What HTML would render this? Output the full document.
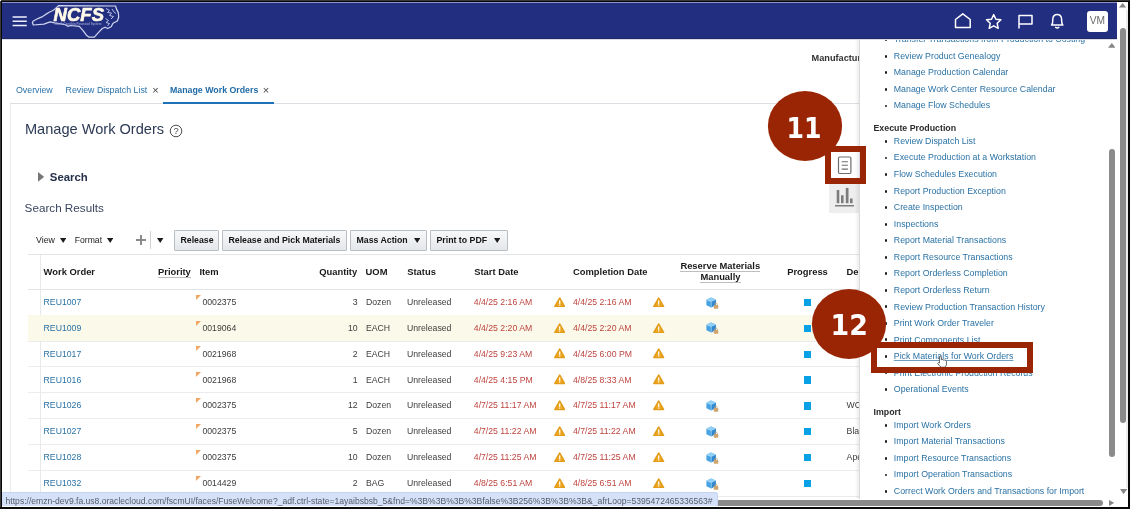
<!DOCTYPE html>
<html><head><meta charset="utf-8"><title>Manage Work Orders</title>
<style>
*{box-sizing:border-box;margin:0;padding:0}
html,body{width:1130px;height:509px;overflow:hidden;background:#fff}
body{will-change:transform}
body{position:relative;font-family:"Liberation Sans",sans-serif;font-size:9.5px;color:#333}
.a{position:absolute}
.t{position:absolute;white-space:nowrap;line-height:1}
#hdr{position:absolute;left:2px;top:2px;width:1115px;height:37px;background:#222e80;border-bottom:1px solid #21275f;box-shadow:0 1px 0 #d9daea}
.tab{font-size:8.8px;color:#2a72a8}
.hd{font-weight:bold;font-size:9.4px;color:#1a1a1a}
.cell{font-size:8.7px;color:#3c3c3c}
.red{color:#bd433e}
.wo{color:#2a72a5}
.btn{position:absolute;top:230px;height:21px;border:1px solid #b9bec4;background:linear-gradient(#f7f8f9,#e4e7ea);font-weight:bold;font-size:8.75px;color:#141414;line-height:19px;text-align:left;padding-left:5.5px;white-space:nowrap;border-radius:1px}
.li{position:absolute;left:893.8px;font-size:8.8px;color:#2a72a5;white-space:nowrap;line-height:1}
.bu{position:absolute;left:884.5px;width:2.9px;height:2.9px;border-radius:50%;background:#1c1c1c}
.sec{position:absolute;left:873.5px;font-size:8.8px;font-weight:bold;color:#2b2b2b;white-space:nowrap;line-height:1}
.tri{position:absolute;width:0;height:0;border-left:3.5px solid transparent;border-right:3.5px solid transparent;border-top:5px solid #222}
</style></head><body>
<div class="t tab" style="left:16px;top:86px;">Overview</div>
<div class="t tab" style="left:65.6px;top:86px;">Review Dispatch List</div>
<div class="t " style="left:152.2px;top:85.2px;color:#444;font-size:11px;">×</div>
<div class="t tab" style="left:170px;top:86px;font-weight:bold;color:#1f6aa5;">Manage Work Orders</div>
<div class="t " style="left:262.8px;top:85.2px;color:#444;font-size:11px;">×</div>
<div class="a" style="left:10px;top:103.4px;width:850px;height:1px;background:#dcdfe3"></div>
<div class="a" style="left:162.5px;top:101.6px;width:111px;height:2.2px;background:#1f72b8"></div>
<div class="a" style="left:10px;top:104px;width:1px;height:400px;background:#e9ebee"></div>
<div class="t " style="left:811.5px;top:54.3px;font-weight:bold;color:#333;font-size:9.2px;">Manufactur</div>
<div class="t " style="left:24.9px;top:122.1px;color:#2c3a55;font-size:14.6px;">Manage Work Orders</div>
<svg class="a" style="left:169.2px;top:124px" width="14" height="14" viewBox="0 0 14 14"><circle cx="7" cy="7" r="5.8" fill="none" stroke="#4e4e4e" stroke-width="1"/><text x="7" y="10.3" text-anchor="middle" font-family="Liberation Sans, sans-serif" font-size="9.4" fill="#4e4e4e">?</text></svg>
<svg class="a" style="left:38.2px;top:172.1px" width="6.2" height="9.8" viewBox="0 0 6.2 9.8"><polygon points="0,0 6.2,4.9 0,9.8" fill="#777"/></svg>
<div class="t " style="left:49.8px;top:172.2px;font-weight:bold;color:#25304a;font-size:11.4px;">Search</div>
<div class="t " style="left:24.6px;top:202.2px;color:#3a4660;font-size:11.7px;">Search Results</div>
<div class="t " style="left:36px;top:235.6px;color:#222;font-size:8.8px;">View</div>
<svg class="a" style="left:59.8px;top:238.2px" width="6.4" height="5" viewBox="0 0 6.4 5"><polygon points="0,0 6.4,0 3.2,5" fill="#1c1c1c"/></svg>
<div class="t " style="left:74.8px;top:235.6px;color:#222;font-size:8.6px;">Format</div>
<svg class="a" style="left:106.8px;top:238.2px" width="6.4" height="5" viewBox="0 0 6.4 5"><polygon points="0,0 6.4,0 3.2,5" fill="#1c1c1c"/></svg>
<div class="a" style="left:136px;top:238.7px;width:9.8px;height:2.7px;background:#8a8a8a"></div>
<div class="a" style="left:139.6px;top:235.1px;width:2.7px;height:9.8px;background:#8a8a8a"></div>
<div class="a" style="left:150.4px;top:231px;width:1px;height:18px;background:#d0d3d6"></div>
<svg class="a" style="left:157.2px;top:238.2px" width="6.4" height="5" viewBox="0 0 6.4 5"><polygon points="0,0 6.4,0 3.2,5" fill="#1c1c1c"/></svg>
<div class="btn" style="left:174px;width:45.4px">Release</div>
<div class="btn" style="left:222px;width:125px">Release and Pick Materials</div>
<div class="btn" style="left:350px;width:77.4px">Mass Action</div>
<svg class="a" style="left:413.6px;top:238.2px" width="6.4" height="5" viewBox="0 0 6.4 5"><polygon points="0,0 6.4,0 3.2,5" fill="#1c1c1c"/></svg>
<div class="btn" style="left:430px;width:77.6px">Print to PDF</div>
<svg class="a" style="left:493.8px;top:238.2px" width="6.4" height="5" viewBox="0 0 6.4 5"><polygon points="0,0 6.4,0 3.2,5" fill="#1c1c1c"/></svg>
<div class="a" style="left:28px;top:254.2px;width:832px;height:1px;background:#e2e4e6"></div>
<div class="a" style="left:28px;top:288.5px;width:832px;height:1px;background:#e2e4e6"></div>
<div class="a" style="left:40px;top:255px;width:1px;height:250px;background:#e8e9eb"></div>
<div class="t hd" style="left:43.6px;top:266.8px;">Work Order</div>
<div class="t hd" style="left:158px;top:266.8px;border-bottom:1px solid #bdbdbd;padding-bottom:1px;">Priority</div>
<div class="t hd" style="left:199.4px;top:266.8px;">Item</div>
<div class="t hd" style="left:319.2px;top:266.8px;">Quantity</div>
<div class="t hd" style="left:365.6px;top:266.8px;">UOM</div>
<div class="t hd" style="left:407.2px;top:266.8px;">Status</div>
<div class="t hd" style="left:474.2px;top:266.8px;">Start Date</div>
<div class="t hd" style="left:573px;top:266.8px;">Completion Date</div>
<div class="t hd" style="left:680.4px;top:261.2px;border-bottom:1px solid #bdbdbd;">Reserve Materials</div>
<div class="t hd" style="left:700.4px;top:271.8px;border-bottom:1px solid #bdbdbd;padding-bottom:1.2px;">Manually</div>
<div class="t hd" style="left:787.2px;top:266.8px;">Progress</div>
<div class="t hd" style="left:846.6px;top:266.8px;">De</div>
<div class="a" style="left:28px;top:314.65px;width:832px;height:1px;background:#ececee"></div>
<div class="t cell wo" style="left:43.6px;top:298.00px;">REU1007</div>
<div class="a" style="left:195.8px;top:294.70px;width:0;height:0;border-top:5.4px solid #f3a562;border-right:5.8px solid transparent"></div>
<div class="t cell" style="left:202.4px;top:298.00px;">0002375</div>
<div class="t cell" style="left:300px;width:57.6px;text-align:right;top:298.00px">3</div>
<div class="t cell" style="left:366px;top:298.00px;">Dozen</div>
<div class="t cell" style="left:407px;top:298.00px;">Unreleased</div>
<div class="t cell red" style="left:473.8px;top:298.00px;">4/4/25 2:16 AM</div>
<svg class="a" style="left:553.6px;top:296.70px" width="11.4" height="10.5" viewBox="0 0 12.4 11.4"><path d="M6.2 1.2 L11.4 10.2 L1 10.2 Z" fill="#eeaa24" stroke="#e39c19" stroke-width="1.8" stroke-linejoin="round"/><rect x="5.55" y="3.6" width="1.3" height="3.9" fill="#fff"/><rect x="5.55" y="8.2" width="1.3" height="1.3" fill="#fff"/></svg>
<div class="t cell red" style="left:573px;top:298.00px;">4/4/25 2:16 AM</div>
<svg class="a" style="left:653.4px;top:296.70px" width="11.4" height="10.5" viewBox="0 0 12.4 11.4"><path d="M6.2 1.2 L11.4 10.2 L1 10.2 Z" fill="#eeaa24" stroke="#e39c19" stroke-width="1.8" stroke-linejoin="round"/><rect x="5.55" y="3.6" width="1.3" height="3.9" fill="#fff"/><rect x="5.55" y="8.2" width="1.3" height="1.3" fill="#fff"/></svg>
<svg class="a" style="left:706.2px;top:296.60px" width="13" height="12" viewBox="0 0 13 12"><path d="M5 0.5 L9.8 2.4 L9.8 7.8 L5.2 10.6 L0.4 8.2 L0.4 2.8 Z" fill="#46a2e2"/><path d="M5 0.5 L9.8 2.4 L5.3 4.6 L0.4 2.8 Z" fill="#8ed0f6"/><path d="M5.3 4.6 L9.8 2.4 L9.8 7.8 L5.2 10.6 Z" fill="#2f88d0"/><path d="M5.3 4.6 L5.2 10.6 M0.4 2.8 L5.3 4.6 L9.8 2.4" stroke="#c9e8fb" stroke-width="0.55" fill="none"/><rect x="7.7" y="8" width="4.6" height="3.7" rx="0.7" fill="#cfa56f"/><path d="M8.7 8 V7.4 a1.3 1.3 0 0 1 2.6 0 V8" fill="none" stroke="#c4a37c" stroke-width="0.8"/></svg>
<div class="a" style="left:804px;top:298.90px;width:7.2px;height:7.3px;background:#08a1e6"></div>
<div class="a" style="left:28px;top:315.15px;width:832px;height:26.45px;background:#faf9ea"></div>
<div class="a" style="left:28px;top:340.50px;width:832px;height:1px;background:#ececee"></div>
<div class="t cell wo" style="left:43.6px;top:323.85px;">REU1009</div>
<div class="a" style="left:195.8px;top:320.55px;width:0;height:0;border-top:5.4px solid #f3a562;border-right:5.8px solid transparent"></div>
<div class="t cell" style="left:202.4px;top:323.85px;">0019064</div>
<div class="t cell" style="left:300px;width:57.6px;text-align:right;top:323.85px">10</div>
<div class="t cell" style="left:366px;top:323.85px;">EACH</div>
<div class="t cell" style="left:407px;top:323.85px;">Unreleased</div>
<div class="t cell red" style="left:473.8px;top:323.85px;">4/4/25 2:20 AM</div>
<svg class="a" style="left:553.6px;top:322.55px" width="11.4" height="10.5" viewBox="0 0 12.4 11.4"><path d="M6.2 1.2 L11.4 10.2 L1 10.2 Z" fill="#eeaa24" stroke="#e39c19" stroke-width="1.8" stroke-linejoin="round"/><rect x="5.55" y="3.6" width="1.3" height="3.9" fill="#fff"/><rect x="5.55" y="8.2" width="1.3" height="1.3" fill="#fff"/></svg>
<div class="t cell red" style="left:573px;top:323.85px;">4/4/25 2:20 AM</div>
<svg class="a" style="left:653.4px;top:322.55px" width="11.4" height="10.5" viewBox="0 0 12.4 11.4"><path d="M6.2 1.2 L11.4 10.2 L1 10.2 Z" fill="#eeaa24" stroke="#e39c19" stroke-width="1.8" stroke-linejoin="round"/><rect x="5.55" y="3.6" width="1.3" height="3.9" fill="#fff"/><rect x="5.55" y="8.2" width="1.3" height="1.3" fill="#fff"/></svg>
<svg class="a" style="left:706.2px;top:322.45px" width="13" height="12" viewBox="0 0 13 12"><path d="M5 0.5 L9.8 2.4 L9.8 7.8 L5.2 10.6 L0.4 8.2 L0.4 2.8 Z" fill="#46a2e2"/><path d="M5 0.5 L9.8 2.4 L5.3 4.6 L0.4 2.8 Z" fill="#8ed0f6"/><path d="M5.3 4.6 L9.8 2.4 L9.8 7.8 L5.2 10.6 Z" fill="#2f88d0"/><path d="M5.3 4.6 L5.2 10.6 M0.4 2.8 L5.3 4.6 L9.8 2.4" stroke="#c9e8fb" stroke-width="0.55" fill="none"/><rect x="7.7" y="8" width="4.6" height="3.7" rx="0.7" fill="#cfa56f"/><path d="M8.7 8 V7.4 a1.3 1.3 0 0 1 2.6 0 V8" fill="none" stroke="#c4a37c" stroke-width="0.8"/></svg>
<div class="a" style="left:804px;top:324.75px;width:7.2px;height:7.3px;background:#08a1e6"></div>
<div class="a" style="left:28px;top:366.35px;width:832px;height:1px;background:#ececee"></div>
<div class="t cell wo" style="left:43.6px;top:349.70px;">REU1017</div>
<div class="a" style="left:195.8px;top:346.40px;width:0;height:0;border-top:5.4px solid #f3a562;border-right:5.8px solid transparent"></div>
<div class="t cell" style="left:202.4px;top:349.70px;">0021968</div>
<div class="t cell" style="left:300px;width:57.6px;text-align:right;top:349.70px">2</div>
<div class="t cell" style="left:366px;top:349.70px;">EACH</div>
<div class="t cell" style="left:407px;top:349.70px;">Unreleased</div>
<div class="t cell red" style="left:473.8px;top:349.70px;">4/4/25 9:23 AM</div>
<svg class="a" style="left:553.6px;top:348.40px" width="11.4" height="10.5" viewBox="0 0 12.4 11.4"><path d="M6.2 1.2 L11.4 10.2 L1 10.2 Z" fill="#eeaa24" stroke="#e39c19" stroke-width="1.8" stroke-linejoin="round"/><rect x="5.55" y="3.6" width="1.3" height="3.9" fill="#fff"/><rect x="5.55" y="8.2" width="1.3" height="1.3" fill="#fff"/></svg>
<div class="t cell red" style="left:573px;top:349.70px;">4/4/25 6:00 PM</div>
<svg class="a" style="left:653.4px;top:348.40px" width="11.4" height="10.5" viewBox="0 0 12.4 11.4"><path d="M6.2 1.2 L11.4 10.2 L1 10.2 Z" fill="#eeaa24" stroke="#e39c19" stroke-width="1.8" stroke-linejoin="round"/><rect x="5.55" y="3.6" width="1.3" height="3.9" fill="#fff"/><rect x="5.55" y="8.2" width="1.3" height="1.3" fill="#fff"/></svg>
<div class="a" style="left:804px;top:350.60px;width:7.2px;height:7.3px;background:#08a1e6"></div>
<div class="a" style="left:28px;top:392.20px;width:832px;height:1px;background:#ececee"></div>
<div class="t cell wo" style="left:43.6px;top:375.55px;">REU1016</div>
<div class="a" style="left:195.8px;top:372.25px;width:0;height:0;border-top:5.4px solid #f3a562;border-right:5.8px solid transparent"></div>
<div class="t cell" style="left:202.4px;top:375.55px;">0021968</div>
<div class="t cell" style="left:300px;width:57.6px;text-align:right;top:375.55px">1</div>
<div class="t cell" style="left:366px;top:375.55px;">EACH</div>
<div class="t cell" style="left:407px;top:375.55px;">Unreleased</div>
<div class="t cell red" style="left:473.8px;top:375.55px;">4/4/25 4:15 PM</div>
<svg class="a" style="left:553.6px;top:374.25px" width="11.4" height="10.5" viewBox="0 0 12.4 11.4"><path d="M6.2 1.2 L11.4 10.2 L1 10.2 Z" fill="#eeaa24" stroke="#e39c19" stroke-width="1.8" stroke-linejoin="round"/><rect x="5.55" y="3.6" width="1.3" height="3.9" fill="#fff"/><rect x="5.55" y="8.2" width="1.3" height="1.3" fill="#fff"/></svg>
<div class="t cell red" style="left:573px;top:375.55px;">4/8/25 8:33 AM</div>
<svg class="a" style="left:653.4px;top:374.25px" width="11.4" height="10.5" viewBox="0 0 12.4 11.4"><path d="M6.2 1.2 L11.4 10.2 L1 10.2 Z" fill="#eeaa24" stroke="#e39c19" stroke-width="1.8" stroke-linejoin="round"/><rect x="5.55" y="3.6" width="1.3" height="3.9" fill="#fff"/><rect x="5.55" y="8.2" width="1.3" height="1.3" fill="#fff"/></svg>
<div class="a" style="left:804px;top:376.45px;width:7.2px;height:7.3px;background:#08a1e6"></div>
<div class="a" style="left:28px;top:418.05px;width:832px;height:1px;background:#ececee"></div>
<div class="t cell wo" style="left:43.6px;top:401.40px;">REU1026</div>
<div class="a" style="left:195.8px;top:398.10px;width:0;height:0;border-top:5.4px solid #f3a562;border-right:5.8px solid transparent"></div>
<div class="t cell" style="left:202.4px;top:401.40px;">0002375</div>
<div class="t cell" style="left:300px;width:57.6px;text-align:right;top:401.40px">12</div>
<div class="t cell" style="left:366px;top:401.40px;">Dozen</div>
<div class="t cell" style="left:407px;top:401.40px;">Unreleased</div>
<div class="t cell red" style="left:473.8px;top:401.40px;">4/7/25 11:17 AM</div>
<svg class="a" style="left:553.6px;top:400.10px" width="11.4" height="10.5" viewBox="0 0 12.4 11.4"><path d="M6.2 1.2 L11.4 10.2 L1 10.2 Z" fill="#eeaa24" stroke="#e39c19" stroke-width="1.8" stroke-linejoin="round"/><rect x="5.55" y="3.6" width="1.3" height="3.9" fill="#fff"/><rect x="5.55" y="8.2" width="1.3" height="1.3" fill="#fff"/></svg>
<div class="t cell red" style="left:573px;top:401.40px;">4/7/25 11:17 AM</div>
<svg class="a" style="left:653.4px;top:400.10px" width="11.4" height="10.5" viewBox="0 0 12.4 11.4"><path d="M6.2 1.2 L11.4 10.2 L1 10.2 Z" fill="#eeaa24" stroke="#e39c19" stroke-width="1.8" stroke-linejoin="round"/><rect x="5.55" y="3.6" width="1.3" height="3.9" fill="#fff"/><rect x="5.55" y="8.2" width="1.3" height="1.3" fill="#fff"/></svg>
<svg class="a" style="left:706.2px;top:400.00px" width="13" height="12" viewBox="0 0 13 12"><path d="M5 0.5 L9.8 2.4 L9.8 7.8 L5.2 10.6 L0.4 8.2 L0.4 2.8 Z" fill="#46a2e2"/><path d="M5 0.5 L9.8 2.4 L5.3 4.6 L0.4 2.8 Z" fill="#8ed0f6"/><path d="M5.3 4.6 L9.8 2.4 L9.8 7.8 L5.2 10.6 Z" fill="#2f88d0"/><path d="M5.3 4.6 L5.2 10.6 M0.4 2.8 L5.3 4.6 L9.8 2.4" stroke="#c9e8fb" stroke-width="0.55" fill="none"/><rect x="7.7" y="8" width="4.6" height="3.7" rx="0.7" fill="#cfa56f"/><path d="M8.7 8 V7.4 a1.3 1.3 0 0 1 2.6 0 V8" fill="none" stroke="#c4a37c" stroke-width="0.8"/></svg>
<div class="a" style="left:804px;top:402.30px;width:7.2px;height:7.3px;background:#08a1e6"></div>
<div class="t cell" style="left:846.6px;top:401.40px;">WC</div>
<div class="a" style="left:28px;top:443.90px;width:832px;height:1px;background:#ececee"></div>
<div class="t cell wo" style="left:43.6px;top:427.25px;">REU1027</div>
<div class="a" style="left:195.8px;top:423.95px;width:0;height:0;border-top:5.4px solid #f3a562;border-right:5.8px solid transparent"></div>
<div class="t cell" style="left:202.4px;top:427.25px;">0002375</div>
<div class="t cell" style="left:300px;width:57.6px;text-align:right;top:427.25px">5</div>
<div class="t cell" style="left:366px;top:427.25px;">Dozen</div>
<div class="t cell" style="left:407px;top:427.25px;">Unreleased</div>
<div class="t cell red" style="left:473.8px;top:427.25px;">4/7/25 11:22 AM</div>
<svg class="a" style="left:553.6px;top:425.95px" width="11.4" height="10.5" viewBox="0 0 12.4 11.4"><path d="M6.2 1.2 L11.4 10.2 L1 10.2 Z" fill="#eeaa24" stroke="#e39c19" stroke-width="1.8" stroke-linejoin="round"/><rect x="5.55" y="3.6" width="1.3" height="3.9" fill="#fff"/><rect x="5.55" y="8.2" width="1.3" height="1.3" fill="#fff"/></svg>
<div class="t cell red" style="left:573px;top:427.25px;">4/7/25 11:22 AM</div>
<svg class="a" style="left:653.4px;top:425.95px" width="11.4" height="10.5" viewBox="0 0 12.4 11.4"><path d="M6.2 1.2 L11.4 10.2 L1 10.2 Z" fill="#eeaa24" stroke="#e39c19" stroke-width="1.8" stroke-linejoin="round"/><rect x="5.55" y="3.6" width="1.3" height="3.9" fill="#fff"/><rect x="5.55" y="8.2" width="1.3" height="1.3" fill="#fff"/></svg>
<svg class="a" style="left:706.2px;top:425.85px" width="13" height="12" viewBox="0 0 13 12"><path d="M5 0.5 L9.8 2.4 L9.8 7.8 L5.2 10.6 L0.4 8.2 L0.4 2.8 Z" fill="#46a2e2"/><path d="M5 0.5 L9.8 2.4 L5.3 4.6 L0.4 2.8 Z" fill="#8ed0f6"/><path d="M5.3 4.6 L9.8 2.4 L9.8 7.8 L5.2 10.6 Z" fill="#2f88d0"/><path d="M5.3 4.6 L5.2 10.6 M0.4 2.8 L5.3 4.6 L9.8 2.4" stroke="#c9e8fb" stroke-width="0.55" fill="none"/><rect x="7.7" y="8" width="4.6" height="3.7" rx="0.7" fill="#cfa56f"/><path d="M8.7 8 V7.4 a1.3 1.3 0 0 1 2.6 0 V8" fill="none" stroke="#c4a37c" stroke-width="0.8"/></svg>
<div class="a" style="left:804px;top:428.15px;width:7.2px;height:7.3px;background:#08a1e6"></div>
<div class="t cell" style="left:846.6px;top:427.25px;">Bla</div>
<div class="a" style="left:28px;top:469.75px;width:832px;height:1px;background:#ececee"></div>
<div class="t cell wo" style="left:43.6px;top:453.10px;">REU1028</div>
<div class="a" style="left:195.8px;top:449.80px;width:0;height:0;border-top:5.4px solid #f3a562;border-right:5.8px solid transparent"></div>
<div class="t cell" style="left:202.4px;top:453.10px;">0002375</div>
<div class="t cell" style="left:300px;width:57.6px;text-align:right;top:453.10px">10</div>
<div class="t cell" style="left:366px;top:453.10px;">Dozen</div>
<div class="t cell" style="left:407px;top:453.10px;">Unreleased</div>
<div class="t cell red" style="left:473.8px;top:453.10px;">4/7/25 11:25 AM</div>
<svg class="a" style="left:553.6px;top:451.80px" width="11.4" height="10.5" viewBox="0 0 12.4 11.4"><path d="M6.2 1.2 L11.4 10.2 L1 10.2 Z" fill="#eeaa24" stroke="#e39c19" stroke-width="1.8" stroke-linejoin="round"/><rect x="5.55" y="3.6" width="1.3" height="3.9" fill="#fff"/><rect x="5.55" y="8.2" width="1.3" height="1.3" fill="#fff"/></svg>
<div class="t cell red" style="left:573px;top:453.10px;">4/7/25 11:25 AM</div>
<svg class="a" style="left:653.4px;top:451.80px" width="11.4" height="10.5" viewBox="0 0 12.4 11.4"><path d="M6.2 1.2 L11.4 10.2 L1 10.2 Z" fill="#eeaa24" stroke="#e39c19" stroke-width="1.8" stroke-linejoin="round"/><rect x="5.55" y="3.6" width="1.3" height="3.9" fill="#fff"/><rect x="5.55" y="8.2" width="1.3" height="1.3" fill="#fff"/></svg>
<svg class="a" style="left:706.2px;top:451.70px" width="13" height="12" viewBox="0 0 13 12"><path d="M5 0.5 L9.8 2.4 L9.8 7.8 L5.2 10.6 L0.4 8.2 L0.4 2.8 Z" fill="#46a2e2"/><path d="M5 0.5 L9.8 2.4 L5.3 4.6 L0.4 2.8 Z" fill="#8ed0f6"/><path d="M5.3 4.6 L9.8 2.4 L9.8 7.8 L5.2 10.6 Z" fill="#2f88d0"/><path d="M5.3 4.6 L5.2 10.6 M0.4 2.8 L5.3 4.6 L9.8 2.4" stroke="#c9e8fb" stroke-width="0.55" fill="none"/><rect x="7.7" y="8" width="4.6" height="3.7" rx="0.7" fill="#cfa56f"/><path d="M8.7 8 V7.4 a1.3 1.3 0 0 1 2.6 0 V8" fill="none" stroke="#c4a37c" stroke-width="0.8"/></svg>
<div class="a" style="left:804px;top:454.00px;width:7.2px;height:7.3px;background:#08a1e6"></div>
<div class="t cell" style="left:846.6px;top:453.10px;">Ape</div>
<div class="a" style="left:28px;top:495.60px;width:832px;height:1px;background:#ececee"></div>
<div class="t cell wo" style="left:43.6px;top:478.95px;">REU1032</div>
<div class="a" style="left:195.8px;top:475.65px;width:0;height:0;border-top:5.4px solid #f3a562;border-right:5.8px solid transparent"></div>
<div class="t cell" style="left:202.4px;top:478.95px;">0014429</div>
<div class="t cell" style="left:300px;width:57.6px;text-align:right;top:478.95px">2</div>
<div class="t cell" style="left:366px;top:478.95px;">BAG</div>
<div class="t cell" style="left:407px;top:478.95px;">Unreleased</div>
<div class="t cell red" style="left:473.8px;top:478.95px;">4/8/25 6:51 AM</div>
<svg class="a" style="left:553.6px;top:477.65px" width="11.4" height="10.5" viewBox="0 0 12.4 11.4"><path d="M6.2 1.2 L11.4 10.2 L1 10.2 Z" fill="#eeaa24" stroke="#e39c19" stroke-width="1.8" stroke-linejoin="round"/><rect x="5.55" y="3.6" width="1.3" height="3.9" fill="#fff"/><rect x="5.55" y="8.2" width="1.3" height="1.3" fill="#fff"/></svg>
<div class="t cell red" style="left:573px;top:478.95px;">4/8/25 6:51 AM</div>
<svg class="a" style="left:653.4px;top:477.65px" width="11.4" height="10.5" viewBox="0 0 12.4 11.4"><path d="M6.2 1.2 L11.4 10.2 L1 10.2 Z" fill="#eeaa24" stroke="#e39c19" stroke-width="1.8" stroke-linejoin="round"/><rect x="5.55" y="3.6" width="1.3" height="3.9" fill="#fff"/><rect x="5.55" y="8.2" width="1.3" height="1.3" fill="#fff"/></svg>
<svg class="a" style="left:706.2px;top:477.55px" width="13" height="12" viewBox="0 0 13 12"><path d="M5 0.5 L9.8 2.4 L9.8 7.8 L5.2 10.6 L0.4 8.2 L0.4 2.8 Z" fill="#46a2e2"/><path d="M5 0.5 L9.8 2.4 L5.3 4.6 L0.4 2.8 Z" fill="#8ed0f6"/><path d="M5.3 4.6 L9.8 2.4 L9.8 7.8 L5.2 10.6 Z" fill="#2f88d0"/><path d="M5.3 4.6 L5.2 10.6 M0.4 2.8 L5.3 4.6 L9.8 2.4" stroke="#c9e8fb" stroke-width="0.55" fill="none"/><rect x="7.7" y="8" width="4.6" height="3.7" rx="0.7" fill="#cfa56f"/><path d="M8.7 8 V7.4 a1.3 1.3 0 0 1 2.6 0 V8" fill="none" stroke="#c4a37c" stroke-width="0.8"/></svg>
<div class="a" style="left:804px;top:479.85px;width:7.2px;height:7.3px;background:#08a1e6"></div>
<div class="a" style="left:829px;top:184px;width:30.5px;height:29px;background:#eeeeee"></div>
<svg class="a" style="left:834px;top:187px" width="22" height="22" viewBox="834 187 22 22" fill="#7d7d7d"><rect x="836.7" y="190" width="2.6" height="13.2"/><rect x="841" y="195.3" width="2.6" height="7.9"/><rect x="845.8" y="187.9" width="2.7" height="15.3"/><rect x="850" y="198.5" width="2.6" height="4.7"/><rect x="835" y="205" width="19" height="1.5"/></svg>
<svg class="a" style="left:836px;top:155px" width="18" height="20" viewBox="836 155 18 20" fill="none" stroke="#6e6e6e" stroke-width="1.2"><rect x="838.5" y="157" width="12.4" height="16.5" rx="1.2"/><path d="M841.7 161.8 h6.2 M841.7 165.3 h6.2 M841.7 169.1 h6.2" stroke-width="1.1"/></svg>
<div class="a" style="left:859px;top:39px;width:258px;height:461px;background:#fff;border-left:1px solid #d9dcdf;box-shadow:-2px 0 3px rgba(0,0,0,0.08)"></div>
<div class="li" style="top:35px;">Transfer Transactions from Production to Costing</div>
<div class="bu" style="top:38.40px"></div>
<div class="li" style="top:52px;">Review Product Genealogy</div>
<div class="bu" style="top:54.94px"></div>
<div class="li" style="top:68px;">Manage Production Calendar</div>
<div class="bu" style="top:71.48px"></div>
<div class="li" style="top:85px;">Manage Work Center Resource Calendar</div>
<div class="bu" style="top:88.02px"></div>
<div class="li" style="top:101px;">Manage Flow Schedules</div>
<div class="bu" style="top:104.56px"></div>
<div class="sec" style="top:124px;">Execute Production</div>
<div class="li" style="top:137px;">Review Dispatch List</div>
<div class="bu" style="top:140.00px"></div>
<div class="li" style="top:153px;">Execute Production at a Workstation</div>
<div class="bu" style="top:156.54px"></div>
<div class="li" style="top:170px;">Flow Schedules Execution</div>
<div class="bu" style="top:173.08px"></div>
<div class="li" style="top:187px;">Report Production Exception</div>
<div class="bu" style="top:189.62px"></div>
<div class="li" style="top:203px;">Create Inspection</div>
<div class="bu" style="top:206.16px"></div>
<div class="li" style="top:220px;">Inspections</div>
<div class="bu" style="top:222.70px"></div>
<div class="li" style="top:236px;">Report Material Transactions</div>
<div class="bu" style="top:239.24px"></div>
<div class="li" style="top:253px;">Report Resource Transactions</div>
<div class="bu" style="top:255.78px"></div>
<div class="li" style="top:269px;">Report Orderless Completion</div>
<div class="bu" style="top:272.32px"></div>
<div class="li" style="top:286px;">Report Orderless Return</div>
<div class="bu" style="top:288.86px"></div>
<div class="li" style="top:303px;">Review Production Transaction History</div>
<div class="bu" style="top:305.40px"></div>
<div class="li" style="top:319px;">Print Work Order Traveler</div>
<div class="bu" style="top:321.94px"></div>
<div class="li" style="top:336px;">Print Components List</div>
<div class="bu" style="top:338.48px"></div>
<div class="li" style="top:352px;text-decoration:underline;text-decoration-color:#6f9dbe;text-decoration-thickness:0.9px;text-underline-offset:1.2px;">Pick Materials for Work Orders</div>
<div class="bu" style="top:355.02px"></div>
<div class="li" style="top:369px;">Print Electronic Production Records</div>
<div class="bu" style="top:371.56px"></div>
<div class="li" style="top:385px;">Operational Events</div>
<div class="bu" style="top:388.10px"></div>
<div class="sec" style="top:408px;">Import</div>
<div class="li" style="top:421px;">Import Work Orders</div>
<div class="bu" style="top:423.90px"></div>
<div class="li" style="top:437px;">Import Material Transactions</div>
<div class="bu" style="top:440.44px"></div>
<div class="li" style="top:454px;">Import Resource Transactions</div>
<div class="bu" style="top:456.98px"></div>
<div class="li" style="top:470px;">Import Operation Transactions</div>
<div class="bu" style="top:473.52px"></div>
<div class="li" style="top:487px;">Correct Work Orders and Transactions for Import</div>
<div class="bu" style="top:490.06px"></div>
<div id="hdr"></div>
<svg class="a" style="left:12px;top:14px" width="16" height="14" viewBox="12 14 16 14"><path d="M12.6 16.9 H26.8 M12.6 21.2 H26.8 M12.6 25.5 H26.8" stroke="#f0f0ff" stroke-width="1.55" fill="none"/></svg>
<svg class="a" style="left:30px;top:3px" width="95" height="36" viewBox="30 3 95 36">
<path d="M32.4 22.8 L33 21.2 L36.4 19.3 L39.5 17.9 L42.6 16.6 L45.7 14.4 L49.2 12.2 L52.3 10.8 L54.5 9.5 L57.2 6.9 L58.5 5.7 L115.6 6 L116.5 9.1 L118.3 12.6 L118.7 17 L117.4 21 L113 23.2 L111.2 26.8 L107.6 28.5 L105 27.2 L102.3 28.5 L98.8 32.1 L96.1 35.2 L94.4 37.2 L89.1 37.2 L86.4 35.2 L82.9 30.3 L79.3 26.3 L70.5 25.5 L67.8 26.3 L65.2 24.6 L54.5 22.8 L50.1 21.9 L43.9 24.1 L33.3 25 Z" fill="none" stroke="#cfd4ee" stroke-width="1.25" stroke-linejoin="round"/>
<path d="M106 8.5 L109.5 10.5 L107.5 12.5 L111.5 13 L109.5 15.5 L113.5 16.5 L111 19 M105.5 18.5 L108.5 20.5 L106 22.5 L109.5 23.5 L107.5 26 M112 9 L114 12 L116 13.5" fill="none" stroke="#b9c0e6" stroke-width="1"/>
<text x="53.6" y="21.4" style="filter:drop-shadow(0.8px 0.7px 0.3px rgba(16,22,80,0.6))" font-family="Liberation Sans, sans-serif" font-weight="bold" font-style="italic" font-size="19.2" fill="#fffaea" stroke="#fffaea" stroke-width="0.7" textLength="50.4" lengthAdjust="spacingAndGlyphs">NCFS</text>
<text x="54.5" y="25.4" font-family="Liberation Sans, sans-serif" font-weight="bold" font-size="2.8" fill="#8f98d0" textLength="47" lengthAdjust="spacingAndGlyphs">North Carolina Financial System</text>
</svg>
<svg class="a" style="left:950px;top:8px" width="120" height="26" viewBox="950 8 120 26" fill="none" stroke="#fff" stroke-width="1.5" stroke-linejoin="round" stroke-linecap="round">
<path d="M955.5 19.5 L962.8 13.8 L970.2 19.5 L970.2 27.6 L955.5 27.6 Z"/>
<path d="M993.7 14.6 L995.9 19.2 L1000.9 19.8 L997.2 23.3 L998.2 28.3 L993.7 25.8 L989.2 28.3 L990.2 23.3 L986.5 19.8 L991.5 19.2 Z"/>
<path d="M1019 28 L1019 15.6 L1032 15.6 L1032 24 L1019 24"/>
<path d="M1051.5 25 C1053.2 23.6 1052.6 21 1052.8 19 C1053.1 16.2 1054.8 14.6 1057.2 14.6 C1059.6 14.6 1061.3 16.2 1061.6 19 C1061.8 21 1061.2 23.6 1062.9 25 Z"/>
<path d="M1055.6 27.4 Q1057.2 28.6 1058.8 27.4"/>
</svg>
<div class="a" style="left:1086.5px;top:10.5px;width:21.5px;height:21.5px;background:#fff;border-radius:3px"></div>
<div class="t " style="left:1089.8px;top:16.2px;color:#6c6c6c;letter-spacing:0px;font-size:10.2px;">VM</div>
<svg class="a" style="left:936.3px;top:355.2px" width="12.6" height="13" viewBox="0 0 12 13"><path d="M3.2 6.8 V2 a0.9 0.9 0 0 1 1.8 0 V5 h0.4 a0.9 0.9 0 0 1 1.7 0.2 a0.9 0.9 0 0 1 1.6 0.3 a0.9 0.9 0 0 1 1.5 0.7 V9 q0 2.6 -2 3.2 H5 Q3.4 11.4 1.4 8.4 q0.6 -1.4 1.8 -0.4 Z" fill="#fff" stroke="#444" stroke-width="0.8" stroke-linejoin="round"/></svg>
<svg class="a" style="left:765px;top:87.8px" width="80" height="76" viewBox="765 87.8 80 76"><ellipse cx="805" cy="125.8" rx="37.1" ry="35" fill="#992504"/><text x="786.6" y="137.9" font-family="DejaVu Sans Condensed, DejaVu Sans, sans-serif" font-weight="bold" font-size="28.4" fill="#fff" textLength="35" lengthAdjust="spacingAndGlyphs">11</text></svg>
<svg class="a" style="left:809px;top:286.1px" width="80" height="76" viewBox="809 286.1 80 76"><ellipse cx="849" cy="324.1" rx="37.1" ry="35" fill="#992504"/><text x="830.6" y="335.3" font-family="DejaVu Sans Condensed, DejaVu Sans, sans-serif" font-weight="bold" font-size="28.4" fill="#fff" textLength="37.4" lengthAdjust="spacingAndGlyphs">12</text></svg>
<div class="a" style="left:871px;top:342px;width:161.6px;height:31px;border:6px solid #992504"></div>
<div class="a" style="left:825px;top:146px;width:41px;height:38px;border:6px solid #992504"></div>
<div class="a" style="left:1117px;top:2px;width:11px;height:498px;background:#fff"></div>
<div class="a" style="left:1126.4px;top:10px;width:1.8px;height:478px;background:#ededed"></div>
<div class="a" style="left:1120px;top:28px;width:5.7px;height:395px;border-radius:3px;background:#8b8b8b"></div>
<div class="a" style="left:1109.4px;top:149px;width:5.4px;height:308px;border-radius:3px;background:#8b8b8b"></div>
<div class="a" style="left:2px;top:499.4px;width:1115px;height:8px;background:#fff"></div>
<div class="a" style="left:716px;top:500.1px;width:386.6px;height:5.8px;border-radius:3px;background:#8a8a8a"></div>
<div class="a" style="left:2px;top:491.8px;width:716px;height:14.4px;background:#d4e1f8;border-top:1px solid #c6d3ee;border-right:1px solid #c6d3ee;border-top-right-radius:3px"></div>
<div class="t " style="left:5.6px;top:497.2px;color:#555c68;font-size:8.57px;">https://emzn-dev9.fa.us8.oraclecloud.com/fscmUI/faces/FuseWelcome?_adf.ctrl-state=1ayaibsbsb_5&amp;fnd=%3B%3B%3B%3Bfalse%3B256%3B%3B%3B&amp;_afrLoop=5395472465336563#</div>
<svg class="a" style="left:1119.2px;top:3px" width="7.2" height="4.6" viewBox="0 0 7.2 4.6"><polygon points="0,4.6 3.6,0 7.2,4.6" fill="#868686"/></svg>
<svg class="a" style="left:1107.6px;top:43.4px" width="7.6" height="4.8" viewBox="0 0 7.6 4.8"><polygon points="0,4.8 3.8,0 7.6,4.8" fill="#868686"/></svg>
<svg class="a" style="left:1119.5px;top:489.2px" width="7.1" height="5.2" viewBox="0 0 7.1 5.2"><polygon points="0,0 7.1,0 3.55,5.2" fill="#868686"/></svg>
<svg class="a" style="left:1109px;top:500.1px" width="5.2" height="5.9" viewBox="0 0 5.2 5.9"><polygon points="0,0 5.2,2.95 0,5.9" fill="#868686"/></svg>
<div class="a" style="left:2px;top:2px;width:1115px;height:1px;background:#8d92c8"></div>
<div class="a" style="left:0;top:0;width:1130px;height:509px;border:1px solid #3a3a3a;border-right-color:#080808;border-bottom-color:#080808"></div>
<div class="a" style="left:1px;top:1px;width:1128px;height:507px;border:1px solid #060606;border-bottom-width:1.4px"></div>
<div class="a" style="left:0;top:506.8px;width:1130px;height:2.2px;background:#0a0a0a"></div>
<div class="a" style="left:0;top:0;width:1px;height:1px;background:#fff"></div>
</body></html>
